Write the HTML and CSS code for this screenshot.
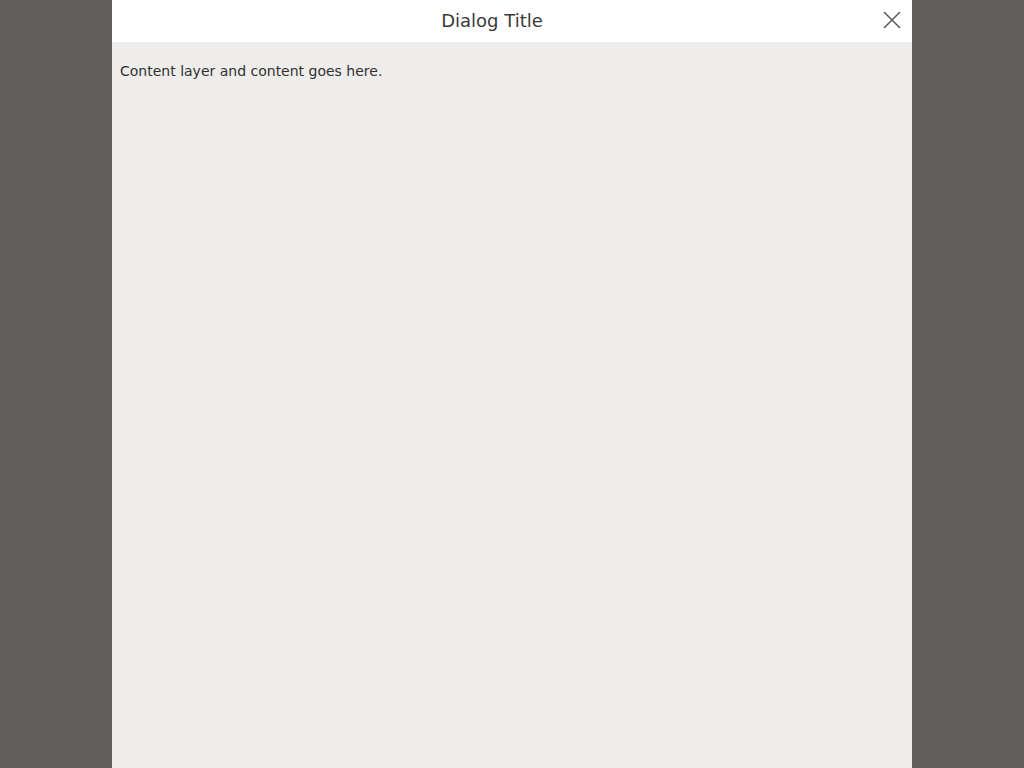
FILE: index.html
```html
<!DOCTYPE html>
<html>
<head>
<meta charset="utf-8">
<link rel="stylesheet" href="styles.css">
</head>
<body>
<div class="backdrop">
  <div class="dialog">
    <div class="header">
      <div class="title">Dialog Title</div>
      <button class="close" aria-label="Close">
        <svg width="18" height="18" viewBox="0 0 18 18"><path d="M1 1 L17 17 M17 1 L1 17" stroke="#605e5c" stroke-width="1.6" fill="none"/></svg>
      </button>
    </div>
    <div class="content">
      <p class="text">Content layer and content goes here.</p>
    </div>
  </div>
</div>
</body>
</html>
```
FILE: styles.css
```css
html, body {
  margin: 0;
  height: 100%;
}
body {
  font-family: "DejaVu Sans", sans-serif;
  color: #323130;
}
.backdrop {
  height: 100%;
  background: #605e5c;
  display: flex;
  justify-content: center;
}
.dialog {
  width: 800px;
  height: 100%;
  display: flex;
  flex-direction: column;
  background: #eeedeb;
}
.header {
  height: 42px;
  flex: none;
  background: #ffffff;
  display: flex;
  align-items: center;
}
.title {
  flex: 1;
  text-align: center;
  font-size: 18px;
  color: #3b3a39;
  padding-bottom: 2px;
}
.close {
  width: 40px;
  height: 42px;
  border: 0;
  background: transparent;
  padding: 0;
  display: flex;
  align-items: center;
  justify-content: center;
  margin-top: -3px;
}
.content {
  flex: 1;
  padding: 0 8px;
}
.text {
  margin: 21px 0 0;
  font-size: 14px;
  line-height: 16px;
}
```
